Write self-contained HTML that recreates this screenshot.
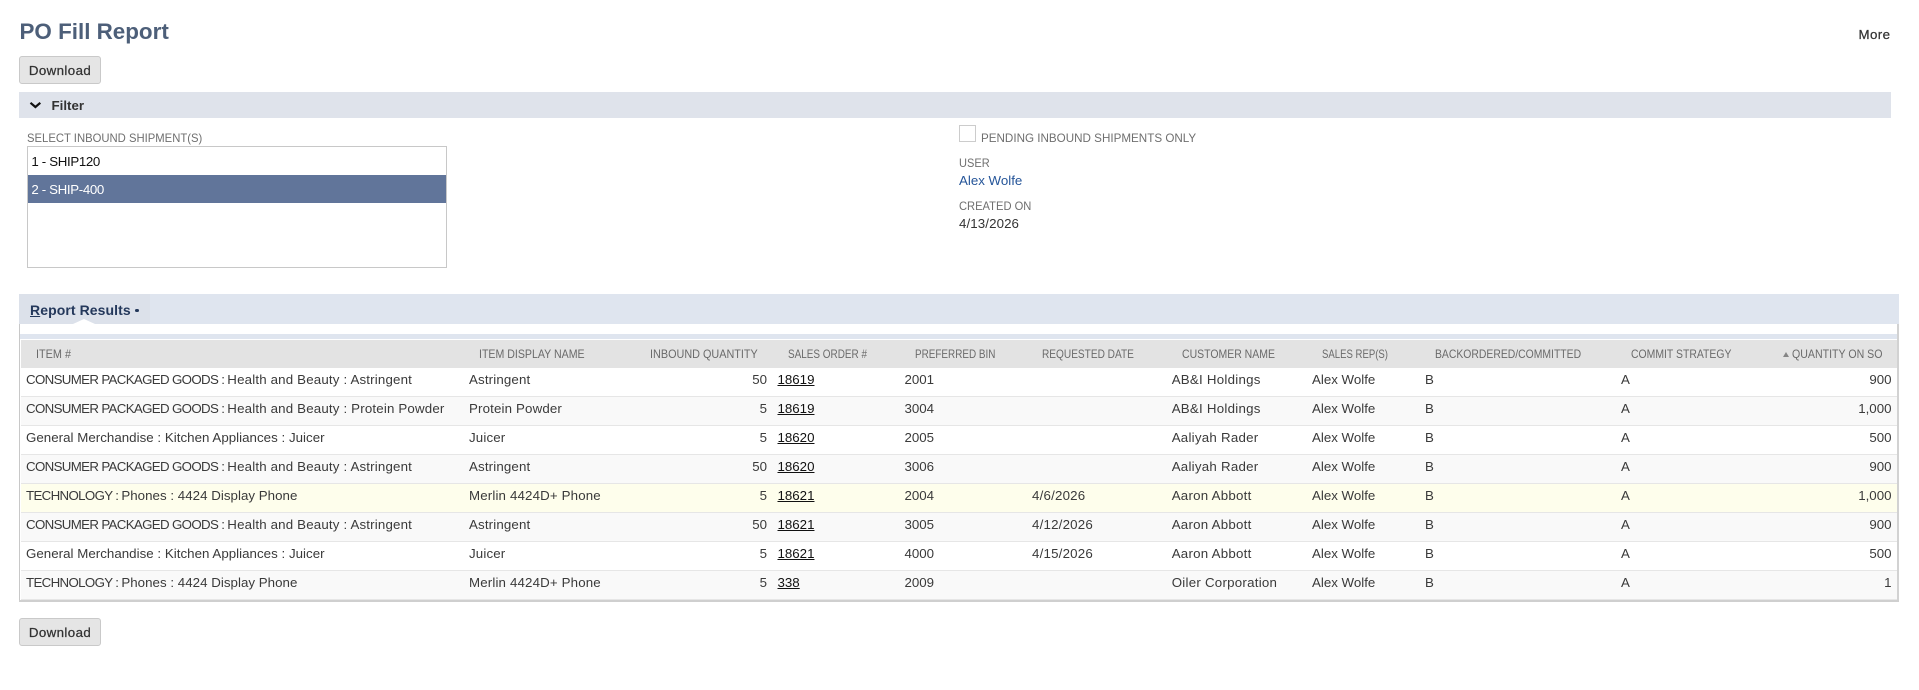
<!DOCTYPE html>
<html><head><meta charset="utf-8"><title>PO Fill Report</title>
<style>
html,body{margin:0;padding:0;background:#fff;width:1919px;height:690px;overflow:hidden}
body{position:relative;font-family:"Liberation Sans",Arial,sans-serif;font-size:13.3px;color:#3a3a3a}
.t{position:absolute;white-space:nowrap;line-height:20px}
.b{position:absolute}
.lb{font-size:12px;color:#6f6f6f;transform-origin:0 50%}
.btn{position:absolute;left:19px;width:80px;height:26px;border:1px solid #c9c9c9;border-radius:3px;background:#e5e5e5;color:#333;text-align:center;line-height:27px;letter-spacing:.4px;-webkit-text-stroke:.25px #333}
.h{position:absolute;white-space:nowrap;top:344px;line-height:20px;font-size:12px;color:#6a6a6a;transform-origin:0 50%}
.r{position:absolute;left:21px;width:1876px;height:28px;border-bottom:1px solid #e6e6e6;background:#fff}
.r.e{background:#f9f9f9}
.r.y{background:#fefeec}
.r span{position:absolute;top:0;line-height:24px;white-space:nowrap}
.r i{font-style:normal;letter-spacing:-.66px}
.r em{font-style:normal;letter-spacing:.17px}
.c1{left:5px;letter-spacing:.03px}.c2{left:448px;letter-spacing:.15px}.c3{left:0;width:746px;text-align:right}
.c4{left:756.5px;color:#111;text-decoration:underline}
.c5{left:883.5px}.c6{left:1011px;letter-spacing:.2px}.c7{left:1150.7px;letter-spacing:.25px}.c8{left:1291px}.c9{left:1404px}.c10{left:1600px}
.c11{left:0;width:1870.5px;text-align:right}
</style></head><body>

<div class="t" style="left:19.5px;top:22px;font-size:22.4px;font-weight:bold;color:#4d5f79">PO Fill Report</div>
<div class="t" style="left:1858.5px;top:25px;color:#333;letter-spacing:.4px;-webkit-text-stroke:.25px #333">More</div>

<div class="btn" style="top:56px">Download</div>

<div class="b" style="left:19px;top:92px;width:1872px;height:26px;background:#dfe3eb"></div>
<svg class="b" style="left:29px;top:101px" width="13" height="8" viewBox="0 0 13 8"><path d="M1.5 1.8 L6.4 6 L11.3 1.8" fill="none" stroke="#111" stroke-width="2.2"/></svg>
<div class="t" style="left:51.5px;top:96px;font-weight:bold;color:#333">Filter</div>

<div class="t lb" style="left:27px;top:128px;transform:scaleX(.94)">SELECT INBOUND SHIPMENT(S)</div>
<div class="b" style="left:27px;top:146px;width:418px;height:120px;border:1px solid #c8c8c8;background:#fff"></div>
<div class="b" style="left:28px;top:175px;width:418px;height:28px;background:#61759a"></div>
<div class="t" style="left:31.4px;top:151.5px;color:#111;letter-spacing:-.35px">1 - SHIP120</div>
<div class="t" style="left:31.4px;top:179.5px;color:#fff;letter-spacing:-.36px">2 - SHIP-400</div>

<div class="b" style="left:959px;top:125px;width:15px;height:15px;border:1px solid #ccc;background:#fff"></div>
<div class="t lb" style="left:981.3px;top:128px;transform:scaleX(.97)">PENDING INBOUND SHIPMENTS ONLY</div>
<div class="t lb" style="left:959px;top:153px;transform:scaleX(.92)">USER</div>
<div class="t" style="left:959px;top:170.5px;color:#255599">Alex Wolfe</div>
<div class="t lb" style="left:959px;top:196px;transform:scaleX(.93)">CREATED ON</div>
<div class="t" style="left:959px;top:213.5px;color:#333;letter-spacing:.1px">4/13/2026</div>

<div class="b" style="left:19px;top:294px;width:1880px;height:30px;background:#dfe5ef"></div>
<div class="b" style="left:19px;top:294px;width:131px;height:30px;background:#dce1ea"></div>
<svg class="b" style="left:70px;top:318px" width="28" height="6" viewBox="0 0 28 6"><path d="M3 6 L14 1 L25 6 Z" fill="#fff"/></svg>
<div class="t" style="left:30px;top:300px;font-size:14px;font-weight:bold;color:#24385b;letter-spacing:.08px"><u>R</u>eport Results</div>
<div class="b" style="left:135px;top:308.5px;width:3.5px;height:3.5px;border-radius:50%;background:#24385b"></div>

<div class="b" style="left:19px;top:324px;width:1px;height:277px;background:#c8c8c8"></div>
<div class="b" style="left:1897px;top:324px;width:2px;height:278px;background:#d2d2d2"></div>
<div class="b" style="left:19px;top:600px;width:1880px;height:2px;background:#cfcfcf"></div>
<div class="b" style="left:20px;top:334px;width:1877px;height:5px;background:#dfe5ef"></div>
<div class="b" style="left:21px;top:340px;width:1876px;height:28px;background:#e3e3e3"></div>

<div class="h" style="left:36px;transform:scaleX(.905)">ITEM #</div>
<div class="h" style="left:479px;transform:scaleX(.883)">ITEM DISPLAY NAME</div>
<div class="h" style="left:650px;transform:scaleX(.903)">INBOUND QUANTITY</div>
<div class="h" style="left:788px;transform:scaleX(.828)">SALES ORDER #</div>
<div class="h" style="left:915px;transform:scaleX(.826)">PREFERRED BIN</div>
<div class="h" style="left:1042px;transform:scaleX(.842)">REQUESTED DATE</div>
<div class="h" style="left:1182px;transform:scaleX(.873)">CUSTOMER NAME</div>
<div class="h" style="left:1322px;transform:scaleX(.798)">SALES REP(S)</div>
<div class="h" style="left:1434.5px;transform:scaleX(.866)">BACKORDERED/COMMITTED</div>
<div class="h" style="left:1631px;transform:scaleX(.869)">COMMIT STRATEGY</div>
<svg class="b" style="left:1783px;top:352px" width="6" height="5" viewBox="0 0 6 5"><path d="M3 0 L6 5 L0 5 Z" fill="#858585"/></svg>
<div class="h" style="left:1792px;transform:scaleX(.883)">QUANTITY ON SO</div>

<div class="r" style="top:368px"><span class="c1"><i>CONSUMER PACKAGED GOODS : </i><em>Health and Beauty : Astringent</em></span><span class="c2">Astringent</span><span class="c3">50</span><span class="c4">18619</span><span class="c5">2001</span><span class="c7">AB&amp;I Holdings</span><span class="c8">Alex Wolfe</span><span class="c9">B</span><span class="c10">A</span><span class="c11">900</span></div>
<div class="r e" style="top:397px"><span class="c1"><i>CONSUMER PACKAGED GOODS : </i><em>Health and Beauty : Protein Powder</em></span><span class="c2">Protein Powder</span><span class="c3">5</span><span class="c4">18619</span><span class="c5">3004</span><span class="c7">AB&amp;I Holdings</span><span class="c8">Alex Wolfe</span><span class="c9">B</span><span class="c10">A</span><span class="c11">1,000</span></div>
<div class="r" style="top:426px"><span class="c1">General Merchandise : Kitchen Appliances : Juicer</span><span class="c2">Juicer</span><span class="c3">5</span><span class="c4">18620</span><span class="c5">2005</span><span class="c7">Aaliyah Rader</span><span class="c8">Alex Wolfe</span><span class="c9">B</span><span class="c10">A</span><span class="c11">500</span></div>
<div class="r e" style="top:455px"><span class="c1"><i>CONSUMER PACKAGED GOODS : </i><em>Health and Beauty : Astringent</em></span><span class="c2">Astringent</span><span class="c3">50</span><span class="c4">18620</span><span class="c5">3006</span><span class="c7">Aaliyah Rader</span><span class="c8">Alex Wolfe</span><span class="c9">B</span><span class="c10">A</span><span class="c11">900</span></div>
<div class="r y" style="top:484px"><span class="c1"><i>TECHNOLOGY : </i>Phones : 4424 Display Phone</span><span class="c2">Merlin 4424D+ Phone</span><span class="c3">5</span><span class="c4">18621</span><span class="c5">2004</span><span class="c6">4/6/2026</span><span class="c7">Aaron Abbott</span><span class="c8">Alex Wolfe</span><span class="c9">B</span><span class="c10">A</span><span class="c11">1,000</span></div>
<div class="r e" style="top:513px"><span class="c1"><i>CONSUMER PACKAGED GOODS : </i><em>Health and Beauty : Astringent</em></span><span class="c2">Astringent</span><span class="c3">50</span><span class="c4">18621</span><span class="c5">3005</span><span class="c6">4/12/2026</span><span class="c7">Aaron Abbott</span><span class="c8">Alex Wolfe</span><span class="c9">B</span><span class="c10">A</span><span class="c11">900</span></div>
<div class="r" style="top:542px"><span class="c1">General Merchandise : Kitchen Appliances : Juicer</span><span class="c2">Juicer</span><span class="c3">5</span><span class="c4">18621</span><span class="c5">4000</span><span class="c6">4/15/2026</span><span class="c7">Aaron Abbott</span><span class="c8">Alex Wolfe</span><span class="c9">B</span><span class="c10">A</span><span class="c11">500</span></div>
<div class="r e" style="top:571px"><span class="c1"><i>TECHNOLOGY : </i>Phones : 4424 Display Phone</span><span class="c2">Merlin 4424D+ Phone</span><span class="c3">5</span><span class="c4">338</span><span class="c5">2009</span><span class="c7">Oiler Corporation</span><span class="c8">Alex Wolfe</span><span class="c9">B</span><span class="c10">A</span><span class="c11">1</span></div>

<div class="btn" style="top:618px">Download</div>
</body></html>
